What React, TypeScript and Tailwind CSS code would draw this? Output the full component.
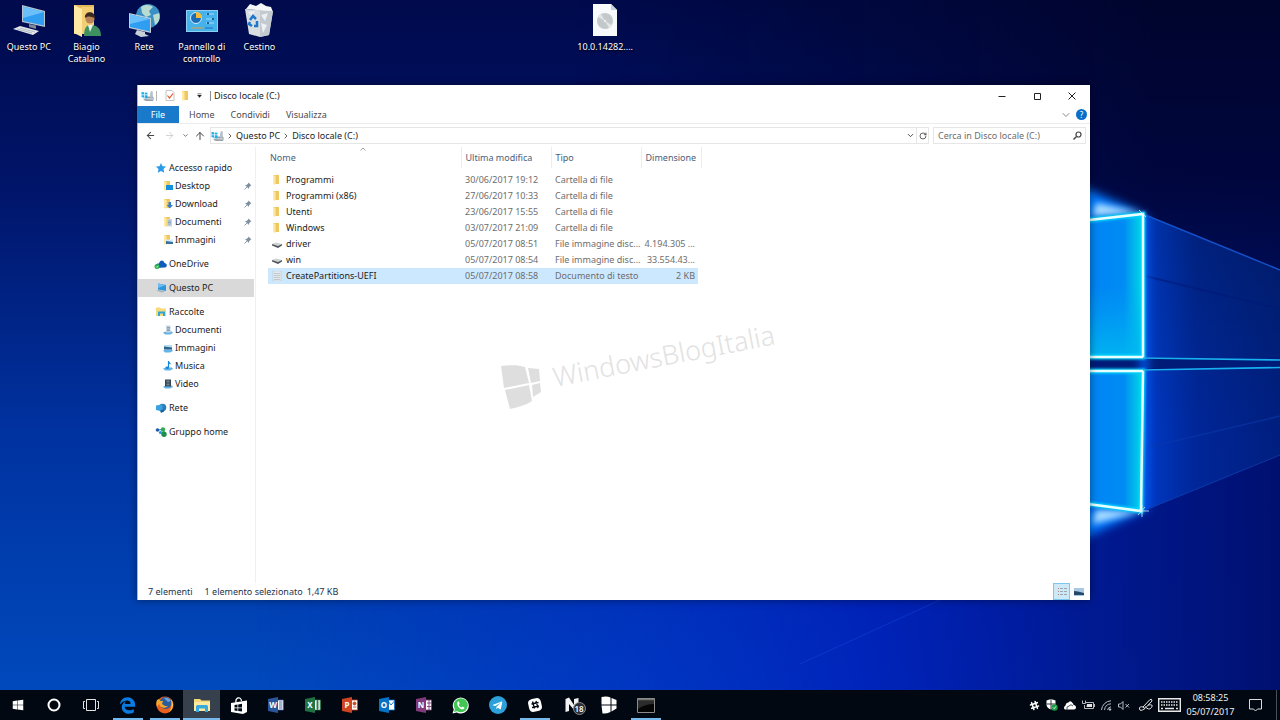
import type { ReactNode } from "react";
import { FaEdgeLegacy, FaSlackHash, FaTelegramPlane, FaWindows } from "react-icons/fa";
import { ArrowLeft, ArrowRight, ArrowUp, ChevronDown, ChevronRight, RotateCw } from "lucide-react";

/* ---------- wallpaper ---------- */

function Wallpaper() {
  return (
    <svg
      className="absolute inset-0 h-full w-full"
      viewBox="0 0 1280 720"
      preserveAspectRatio="xMidYMid slice"
      aria-hidden="true"
    >
      <defs>
        <linearGradient id="sky" x1="0" y1="0" x2="0" y2="1">
          <stop offset="0" stopColor="#000a4c" />
          <stop offset="0.25" stopColor="#001468" />
          <stop offset="0.6" stopColor="#0032a0" />
          <stop offset="1" stopColor="#004cc0" />
        </linearGradient>
        <linearGradient id="shade" x1="0" y1="0" x2="1" y2="0">
          <stop offset="0.2" stopColor="#0020c8" stopOpacity="0" />
          <stop offset="0.5" stopColor="#0020c8" stopOpacity="0.45" />
          <stop offset="0.68" stopColor="#0018b8" stopOpacity="0.75" />
          <stop offset="0.85" stopColor="#001890" stopOpacity="0.95" />
          <stop offset="1" stopColor="#001070" />
        </linearGradient>
        <linearGradient id="shadeFade" x1="0" y1="0" x2="0" y2="1">
          <stop offset="0.1" stopColor="#000" />
          <stop offset="0.6" stopColor="#fff" />
        </linearGradient>
        <mask id="shadeMask">
          <rect width="1280" height="720" fill="url(#shadeFade)" />
        </mask>
        <linearGradient id="night" x1="0" y1="0" x2="0" y2="1">
          <stop offset="0" stopColor="#00052e" />
          <stop offset="0.25" stopColor="#000538" stopOpacity="0.9" />
          <stop offset="0.6" stopColor="#000538" stopOpacity="0" />
        </linearGradient>
        <linearGradient id="nightFade" x1="0" y1="0" x2="1" y2="0">
          <stop offset="0.45" stopColor="#000" />
          <stop offset="0.9" stopColor="#fff" />
        </linearGradient>
        <mask id="nightMask">
          <rect width="1280" height="720" fill="url(#nightFade)" />
        </mask>
        <linearGradient id="paneTop" x1="0" y1="0" x2="1" y2="0">
          <stop offset="0" stopColor="#0082f4" />
          <stop offset="0.7" stopColor="#008cf4" />
          <stop offset="1" stopColor="#00dce4" />
        </linearGradient>
        <linearGradient id="paneEdge" x1="0" y1="0" x2="0" y2="1">
          <stop offset="0.5" stopColor="#00a8f4" stopOpacity="0" />
          <stop offset="1" stopColor="#00b8f0" stopOpacity="0.9" />
        </linearGradient>
        <linearGradient id="beam" x1="0" y1="0" x2="1" y2="0">
          <stop offset="0" stopColor="#0048e0" stopOpacity="0.75" />
          <stop offset="0.4" stopColor="#0038b0" stopOpacity="0.5" />
          <stop offset="1" stopColor="#003090" stopOpacity="0.45" />
        </linearGradient>
        <filter id="glow" x="-50%" y="-50%" width="200%" height="200%">
          <feGaussianBlur stdDeviation="5" />
        </filter>
        <filter id="haze" x="-50%" y="-50%" width="200%" height="200%">
          <feGaussianBlur stdDeviation="3" />
        </filter>
        <filter id="soft" x="-20%" y="-20%" width="140%" height="140%">
          <feGaussianBlur stdDeviation="1" />
        </filter>
      </defs>
      <rect width="1280" height="720" fill="url(#sky)" />
      <rect width="1280" height="720" fill="url(#shade)" mask="url(#shadeMask)" />
      <rect width="1280" height="720" fill="url(#night)" mask="url(#nightMask)" />
      <path d="M800 664 940 600" stroke="#1c50e0" strokeWidth="1" opacity="0.4" />

      {/* light beams leaving the panes */}
      <path d="M1143 214 1280 270V360L1143 357Z" fill="url(#beam)" />
      <path d="M1143 371 1280 367V455L1143 511Z" fill="url(#beam)" />
      <path d="M1143 214 1280 270" stroke="#1450c8" strokeWidth="1.500" />
      <path d="M1143 511 1280 455" stroke="#1244b4" strokeWidth="1" opacity="0.7" />
      <path d="M1145 276 1280 309" stroke="#001a78" strokeWidth="2" opacity="0.6" />
      <path d="M1145 448 1280 416" stroke="#0c38a8" strokeWidth="1.500" opacity="0.6" />
      <path d="M1090 358H1280V368H1090Z" fill="#001c78" />
      <g filter="url(#glow)">
        <path d="M1080 186 1143 213 1080 222Z" fill="#0078ff" />
        <path d="M1080 540 1143 511 1080 503Z" fill="#0078ff" />
        <path d="M1144 214V511" stroke="#0060ff" strokeWidth="7" />
      </g>
      <path d="M1096 203 1143 213 1092 216Z" fill="#a8dcff" filter="url(#haze)" />
      <path d="M1092 524 1143 511 1096 510Z" fill="#a8dcff" filter="url(#haze)" />
      <path d="M1080 221 1143 214V357H1080Z" fill="url(#paneTop)" />
      <path d="M1080 221 1143 214V357H1080Z" fill="url(#paneEdge)" />
      <path d="M1080 371H1143L1141 511 1080 503Z" fill="url(#paneTop)" />
      <g fill="none" stroke="#00d8ff" strokeWidth="5" filter="url(#soft)">
        <path d="M1080 221 1143 214V357H1080" />
        <path d="M1080 371H1143L1141 511 1080 503" />
      </g>
      <g fill="none" stroke="#e8ffff" strokeWidth="2.500">
        <path d="M1080 221 1143 214V357H1080" />
        <path d="M1080 371H1143L1141 511 1080 503" />
      </g>
      <path d="M1143 358 1280 360M1143 370 1280 367.500" stroke="#18b0f0" strokeWidth="1.600" />
      <path d="M1139 210 1146 217M1138 515 1145 507M1136 511H1149M1142 505V517" stroke="#c8f4ff" strokeWidth="0.800" />
    </svg>
  );
}

/* ---------- desktop icons ---------- */

function PcIcon() {
  return (
    <svg width="34" height="34" viewBox="0 0 34 34">
      <path d="M10 2 33 8V24L10 19Z" fill="#b9c6d0" />
      <path d="M11 3.500 32 9V22.500L11 18Z" fill="#2f9df0" />
      <path d="M11 3.500 32 9 11 15Z" fill="#6cc0fa" />
      <path d="M17 21 24 22.500V26L17 24Z" fill="#7d8a94" />
      <path d="M1 26 8 23 27 28 21 32Z" fill="#e3e8ec" />
      <path d="M5 26 20 30M8 25 23 29" stroke="#a5afb8" strokeWidth="0.8" />
    </svg>
  );
}

function UserFolderIcon() {
  return (
    <svg width="34" height="34" viewBox="0 0 34 34">
      <path d="M5 2H25V31H5Z" fill="#e2b95a" />
      <path d="M12 4H25V31H12Z" fill="#f3cf74" />
      <path d="M5 2 13 6V34L5 30Z" fill="#ffe9a4" />
      <circle cx="21" cy="16" r="4.500" fill="#b98457" />
      <path d="M16 15C15 8 26 7 26 15 22 14 20 12 16 15Z" fill="#3c2a20" />
      <path d="M15 33C15 24 18 22 22 22S32 24 32 33Z" fill="#3d9160" />
      <path d="M19 22 21 29 24 22Z" fill="#e8f0ea" />
    </svg>
  );
}

function NetworkIcon() {
  return (
    <svg width="34" height="34" viewBox="0 0 34 34">
      <circle cx="21" cy="13" r="12" fill="#3b8fc4" />
      <path d="M14 4C18 1 24 2 26 4L22 8 24 12 19 14 15 10ZM26 12 32 10C34 16 31 20 28 22Z" fill="#b8dcd0" />
      <path d="M2 10 24 15V30L2 25Z" fill="#c3d0d8" />
      <path d="M3 11.500 23 16V28.500L3 24Z" fill="#2f9df0" />
      <path d="M3 11.500 23 16 3 21Z" fill="#6cc0fa" />
      <path d="M10 27 18 29V31L22 33 14 34 8 31Z" fill="#c8d0d6" />
    </svg>
  );
}

function ControlPanelIcon() {
  return (
    <svg width="34" height="34" viewBox="0 0 34 34">
      <rect x="1" y="7" width="32" height="22" fill="#8fd0f2" />
      <rect x="2" y="8" width="30" height="20" fill="#45b2ec" />
      <circle cx="11" cy="15" r="5.500" fill="#1b6cb8" stroke="#d9f0ff" />
      <path d="M11 15V9C14 9 17 11 17 15Z" fill="#f5b93a" />
      <path d="M21 11H29M21 16H29M21 20H29" stroke="#a8dcf8" />
      <path d="M22 11H24M27 16H29M22 20H24" stroke="#1b5f9e" strokeWidth="2" />
      <path d="M6 25H18" stroke="#e0a03a" />
      <path d="M20 25H28" stroke="#1b6cb8" />
    </svg>
  );
}

function BinIcon() {
  return (
    <svg width="34" height="34" viewBox="0 0 34 34">
      <path d="M4 6 8 1 14 3 19 0 24 3 29 4 31 9Z" fill="#f4f6f8" />
      <path d="M3 6 31 8 27 32 18 34 7 31Z" fill="#d9dee2" />
      <path d="M18 8 31 8 27 32 18 34Z" fill="#c2c9cf" />
      <path d="M19 12 26 10 23 18ZM19 20 25 22 21 30ZM6 9 13 8 10 13Z" fill="#eef1f3" />
      <g fill="none" stroke="#1f77c8" strokeWidth="2.500">
        <path d="M8 17 11 13 14 16" />
        <path d="M15 18 15 23 12 23" />
        <path d="M10 23 7 21 8 19" />
      </g>
    </svg>
  );
}

function DiscFileIcon() {
  return (
    <svg width="34" height="34" viewBox="0 0 34 34">
      <path d="M5 1H23L29 7V33H5Z" fill="#f8f9fa" />
      <path d="M23 1V7H29Z" fill="#c9d3d6" />
      <circle cx="17" cy="18" r="8" fill="#c3c8ca" />
      <path d="M17 18 10 14A8 8 0 0 1 13 11ZM17 18 24 22A8 8 0 0 1 21 25Z" fill="#e2e5e5" />
      <circle cx="17" cy="18" r="1.200" fill="#eef0f0" />
    </svg>
  );
}

function DesktopItem({ label, className = "", children }: { label: string; className?: string; children: ReactNode }) {
  return (
    <button className={`flex flex-col items-center gap-1 text-center text-white ${className}`}>
      {children}
      <span className="leading-[12px] text-shadow-[0_1px_2px_#000000]">{label}</span>
    </button>
  );
}

/* ---------- small explorer icons ---------- */

function DriveIcon() {
  return (
    <svg width="13" height="12" viewBox="0 0 13 12" className="shrink-0">
      <path d="M3 8 6 6.500H12L13 8.500 12 11H5L2.500 10Z" fill="#97a3ab" />
      <path d="M3 8 13 8.500 12.500 9.500 3 9Z" fill="#dce2e6" />
      <path d="M10 1 11.800 1.500V7.500H9V4Z" fill="#b8c2c9" />
      <path d="M0.500 2 3 2.300V4.500H0.500ZM3.700 2.400 6.500 2.800V4.500H3.700ZM0.500 5.200H3V7.800L0.500 7ZM3.700 5.200H6.500V8.600L3.700 8Z" fill="#1eaeea" />
    </svg>
  );
}

function FolderGlyph() {
  return (
    <>
      <path d="M1 0H7V9H1Z" fill="#f0c862" />
      <path d="M1 0 3.500 1V10L1 9Z" fill="#ffe8a0" />
    </>
  );
}

function NavIcon({ name }: { name: string }) {
  const libraryBase = <path d="M0 7.500 3 6.500H9L10 8 7 9.500H2Z" fill="#63b4e8" />;
  return (
    <svg width="10" height="10" viewBox="0 0 10 10" className="shrink-0 overflow-visible">
      {name === "star" && (
        <path d="M5 0 6.500 3.200 10 3.600 7.500 6 8.200 9.800 5 8 1.800 9.800 2.500 6 0 3.600 3.500 3.200Z" fill="#2a9be8" />
      )}
      {name === "desktop" && (
        <>
          <FolderGlyph />
          <path d="M3 4H10V9H3Z" fill="#1590dc" />
        </>
      )}
      {name === "download" && (
        <>
          <FolderGlyph />
          <path d="M5.500 3H8V6H10L6.800 9.500 3.800 6H5.500Z" fill="#2f7ed0" />
        </>
      )}
      {name === "documents" && (
        <>
          <FolderGlyph />
          <path d="M4 2H9V9.500H4Z" fill="#c9d6df" />
          <path d="M5 4H8M5 5.500H8M5 7H8" stroke="#6f94b4" strokeWidth="0.7" />
        </>
      )}
      {name === "pictures" && (
        <>
          <FolderGlyph />
          <path d="M3 4.500H10V9H3Z" fill="#d6ebf8" />
          <path d="M3 6 10 7V9H3Z" fill="#35719f" />
        </>
      )}
      {name === "onedrive" && (
        <>
          <path d="M0 9C-1 6 1 4 3 4.500 4 0 8 1 8.500 4 11 4 12 8 9 8.500Z" fill="#0f5fb8" />
          <circle cx="1" cy="7.500" r="2.500" fill="#28b04a" />
          <path d="M0 7.500 1 8.500 2.300 6.700" fill="none" stroke="#fff" strokeWidth="0.7" />
        </>
      )}
      {name === "pc" && (
        <>
          <path d="M2 0.500 10 2V8L2 6.500Z" fill="#2f96dc" />
          <path d="M2 0.500 10 2 2 5Z" fill="#6cbcf0" />
          <path d="M0 7.500 3 7 9 8.500 6 9.500Z" fill="#9fb2c0" />
        </>
      )}
      {name === "libraries" && (
        <>
          <path d="M0 0.500H4L5 1.500H10V9H0Z" fill="#f5da7c" />
          <path d="M2 9V4.500H9V9H7V6.500H4V9Z" fill="#2fa6d8" />
        </>
      )}
      {name === "lib-documents" && (
        <>
          {libraryBase}
          <path d="M3 0.500H7.500V7.500H3Z" fill="#c4d4e0" />
          <path d="M4 2.500H7M4 4H7M4 5.500H7" stroke="#6688a6" strokeWidth="0.7" />
        </>
      )}
      {name === "lib-pictures" && (
        <>
          {libraryBase}
          <path d="M1 2H9V6.500H1Z" fill="#b6dcf2" />
          <path d="M1 3.500 9 4.500V6.500H1Z" fill="#2c648c" />
        </>
      )}
      {name === "lib-music" && (
        <>
          {libraryBase}
          <path d="M5.500 0V6.500" stroke="#1585d4" strokeWidth="1.200" />
          <path d="M5.500 0 8.500 3.500 5.500 2.500Z" fill="#1585d4" />
          <ellipse cx="4.300" cy="6.700" rx="1.800" ry="1.300" fill="#1585d4" />
        </>
      )}
      {name === "lib-video" && (
        <>
          {libraryBase}
          <path d="M2 0.500H8V7.500H2Z" fill="#39444f" />
          <path d="M3.500 1.500H6.500V3.500H3.500ZM3.500 4.500H6.500V6.500H3.500Z" fill="#6a8296" />
        </>
      )}
      {name === "network" && (
        <>
          <circle cx="6.500" cy="4.500" r="3.800" fill="#2b7fb0" />
          <path d="M0 2.500 6.500 1.500V8.500L0 7Z" fill="#3aa0e4" />
          <path d="M4 7.500 8 6.500V8.500L5 10Z" fill="#1e5f92" />
        </>
      )}
      {name === "homegroup" && (
        <>
          <path d="M1.500 3 7.500 2.500 8 8" stroke="#2c9cae" strokeWidth="1.200" fill="none" />
          <circle cx="1.500" cy="3" r="1.800" fill="#1c5fb0" />
          <circle cx="7" cy="2.500" r="2.200" fill="#35a853" />
          <circle cx="8" cy="7.200" r="2.700" fill="#1c8f4a" />
          <circle cx="4.500" cy="5.500" r="1.600" fill="#2796cc" />
        </>
      )}
    </svg>
  );
}

function PinIcon() {
  return (
    <svg width="8" height="8" viewBox="0 0 8 8" className="ml-auto">
      <path d="M4.500 0.500 7.500 3.500 6.500 3.800 5 5.500V7L1 3H2.500L4.200 1.500Z" fill="#7d8fa0" />
      <path d="M0.500 7.500 3 5" stroke="#7d8fa0" strokeWidth="0.9" />
    </svg>
  );
}

const navGroups = [
  [
    { label: "Accesso rapido", icon: "star" },
    { label: "Desktop", icon: "desktop", child: true, pinned: true },
    { label: "Download", icon: "download", child: true, pinned: true },
    { label: "Documenti", icon: "documents", child: true, pinned: true },
    { label: "Immagini", icon: "pictures", child: true, pinned: true },
  ],
  [{ label: "OneDrive", icon: "onedrive" }],
  [{ label: "Questo PC", icon: "pc", selected: true }],
  [
    { label: "Raccolte", icon: "libraries" },
    { label: "Documenti", icon: "lib-documents", child: true },
    { label: "Immagini", icon: "lib-pictures", child: true },
    { label: "Musica", icon: "lib-music", child: true },
    { label: "Video", icon: "lib-video", child: true },
  ],
  [{ label: "Rete", icon: "network" }],
  [{ label: "Gruppo home", icon: "homegroup" }],
] as { label: string; icon: string; child?: boolean; pinned?: boolean; selected?: boolean }[][];

const files = [
  { name: "Programmi", date: "30/06/2017 19:12", type: "Cartella di file", size: "", icon: "folder" },
  { name: "Programmi (x86)", date: "27/06/2017 10:33", type: "Cartella di file", size: "", icon: "folder" },
  { name: "Utenti", date: "23/06/2017 15:55", type: "Cartella di file", size: "", icon: "folder" },
  { name: "Windows", date: "03/07/2017 21:09", type: "Cartella di file", size: "", icon: "folder" },
  { name: "driver", date: "05/07/2017 08:51", type: "File immagine disc...", size: "4.194.305 ...", icon: "disk" },
  { name: "win", date: "05/07/2017 08:54", type: "File immagine disc...", size: "33.554.43...", icon: "disk" },
  { name: "CreatePartitions-UEFI", date: "05/07/2017 08:58", type: "Documento di testo", size: "2 KB", icon: "text", selected: true },
];

function FileIcon({ kind }: { kind: string }) {
  return (
    <svg width="10" height="10" viewBox="0 0 10 10" className="shrink-0">
      {kind === "folder" && <FolderGlyph />}
      {kind === "disk" && (
        <>
          <path d="M0 5 4 3.500 10 5 6 7Z" fill="#cfd3d6" />
          <path d="M0 5 6 7 10 5V6.500L6 9 0 6.500Z" fill="#4e5458" />
        </>
      )}
      {kind === "text" && (
        <>
          <path d="M1 0H9V10H1Z" fill="#e6eaec" stroke="#b4bdc2" strokeWidth="0.500" />
          <path d="M2 2.500H8M2 4.500H8M2 6.500H8M2 8.500H8" stroke="#a3afb6" strokeWidth="0.6" />
        </>
      )}
    </svg>
  );
}

/* ---------- explorer window ---------- */

function TitleBar() {
  return (
    <header className="flex h-[21px] shrink-0 items-center pr-px pl-[3px]">
      <DriveIcon />
      <span className="ml-[2px] h-[10px] w-px bg-[#b5b5b5]" />
      <button aria-label="Proprietà" className="ml-2">
        <svg width="10" height="11" viewBox="0 0 10 11">
          <path d="M1 0.500H7L9 2.500V10.500H1Z" fill="#fff" stroke="#b8b8b8" strokeWidth="0.8" />
          <path d="M2.500 5.500 4.500 8 8 3.500" fill="none" stroke="#e0562a" strokeWidth="1.200" />
        </svg>
      </button>
      <button aria-label="Nuova cartella" className="ml-[6px]">
        <svg width="8" height="10" viewBox="0 0 8 10">
          <FolderGlyph />
        </svg>
      </button>
      <button aria-label="Personalizza barra" className="ml-2">
        <svg width="5" height="5" viewBox="0 0 5 5">
          <path d="M0.500 0.500H4.500M0.500 2H4.500L2.500 4.500Z" fill="#222" stroke="#222" strokeWidth="0.4" />
        </svg>
      </button>
      <span className="ml-2 h-[10px] w-px bg-[#8c8c8c]" />
      <h1 className="ml-[3px] text-[#1c1c1c]">Disco locale (C:)</h1>
      <div className="ml-auto flex h-full text-[#222222]">
        <button aria-label="Riduci a icona" className="flex w-[35px] items-center justify-center">
          <svg width="8" height="8" viewBox="0 0 8 8">
            <path d="M0.500 4.500H7.500" stroke="currentColor" />
          </svg>
        </button>
        <button aria-label="Ingrandisci" className="flex w-[35px] items-center justify-center">
          <svg width="8" height="8" viewBox="0 0 8 8">
            <path d="M1.500 1.500H7.500V7.500H1.500Z" fill="none" stroke="currentColor" />
          </svg>
        </button>
        <button aria-label="Chiudi" className="flex w-[35px] items-center justify-center">
          <svg width="8" height="8" viewBox="0 0 8 8">
            <path d="M0.500 0.500 7.500 7.500M7.500 0.500 0.500 7.500" stroke="currentColor" />
          </svg>
        </button>
      </div>
    </header>
  );
}

function RibbonTabs() {
  return (
    <div className="flex h-[18px] shrink-0 items-stretch border-b border-[#ececec] text-[#4a4a4a]">
      <button className="-ml-px w-[42px] bg-[#1979ca] text-white">File</button>
      <div className="flex pl-[2px]">
        {["Home", "Condividi", "Visualizza"].map((tab) => (
          <button key={tab} className="px-2">
            {tab}
          </button>
        ))}
      </div>
      <button aria-label="Espandi barra multifunzione" className="mr-1 ml-auto">
        <ChevronDown size={12} strokeWidth={2} color="#8a8a8a" />
      </button>
      <button
        aria-label="Guida"
        className="mr-[3px] flex size-[11px] items-center justify-center self-center rounded-full bg-[#0a6fc8] text-[8px] text-white"
      >
        ?
      </button>
    </div>
  );
}

function AddressBar() {
  return (
    <div className="flex h-[23px] shrink-0 items-center pr-1">
      <nav className="flex w-[72px] items-center pl-[7px] text-[#444444]" aria-label="Cronologia">
        <button aria-label="Indietro">
          <ArrowLeft size={11} strokeWidth={2.2} />
        </button>
        <button aria-label="Avanti" className="ml-2 text-[#cfcfcf]">
          <ArrowRight size={11} strokeWidth={2} />
        </button>
        <button aria-label="Posizioni recenti" className="ml-[7px]">
          <ChevronDown size={7} strokeWidth={2.5} />
        </button>
        <button aria-label="Su" className="ml-[5px]">
          <ArrowUp size={12} strokeWidth={2} />
        </button>
      </nav>
      <div className="flex h-[17px] flex-1 items-center border border-[#e6e6e6] text-[#1c1c1c]">
        <DriveIcon />
        <ChevronRight size={8} strokeWidth={2.5} className="mx-[2px] text-[#444444]" />
        <button>Questo PC</button>
        <ChevronRight size={8} strokeWidth={2.5} className="mx-[2px] text-[#444444]" />
        <button>Disco locale (C:)</button>
        <button aria-label="Percorsi precedenti" className="mr-[1px] ml-auto">
          <ChevronDown size={9} strokeWidth={2.5} className="text-[#444444]" />
        </button>
        <button aria-label="Aggiorna" className="flex h-full w-3 items-center justify-center border-l border-[#e6e6e6]">
          <RotateCw size={8} strokeWidth={2.5} className="text-[#444444]" />
        </button>
      </div>
      <label className="ml-1 flex h-[17px] w-[153px] items-center border border-[#e6e6e6] pr-[3px] pl-1">
        <input
          type="search"
          aria-label="Cerca"
          placeholder="Cerca in Disco locale (C:)"
          className="min-w-0 flex-1 outline-none placeholder:text-[#6d6d6d]"
        />
        <svg width="9" height="9" viewBox="0 0 9 9">
          <circle cx="5.500" cy="3.500" r="2.500" fill="none" stroke="#444" strokeWidth="1.200" />
          <path d="M3.500 5.500 0.500 8.500" stroke="#444" strokeWidth="1.400" />
        </svg>
      </label>
    </div>
  );
}

function NavigationPane() {
  return (
    <aside className="flex w-[118px] shrink-0 flex-col gap-[6px] border-r border-[#f0f0f0] pt-3 pr-[1px] text-[#1c1c1c]">
      {navGroups.map((group) => (
        <ul key={group[0].label}>
          {group.map((item) => (
            <li key={item.label}>
              <a
                href="#"
                className={`flex h-[18px] items-center pr-[2px] ${item.child ? "gap-[2px] pl-[25px]" : "gap-[3px] pl-[18px]"} ${item.selected ? "bg-[#d9d9d9]" : ""}`}
              >
                <NavIcon name={item.icon} />
                {item.label}
                {item.pinned && <PinIcon />}
              </a>
            </li>
          ))}
        </ul>
      ))}
    </aside>
  );
}

function FileTable() {
  return (
    <table className="w-[433px] table-fixed border-collapse self-start whitespace-nowrap text-[#6d6d6d]">
      <colgroup>
        <col className="w-[193px]" />
        <col className="w-[90px]" />
        <col className="w-[90px]" />
        <col className="w-[57px]" />
        <col className="w-[3px]" />
      </colgroup>
      <thead>
        <tr className="h-[21px] text-left text-[#4c607a] [&>th]:border-r [&>th]:border-[#ededed] [&>th]:font-normal">
          <th className="relative pl-[2px]">
            Nome
            <svg width="6" height="4" viewBox="0 0 6 4" className="absolute top-0 left-[92px]">
              <path d="M0.500 3.500 3 1 5.500 3.500" fill="none" stroke="#8a8a8a" strokeWidth="0.8" />
            </svg>
          </th>
          <th className="pl-1">Ultima modifica</th>
          <th className="pl-1">Tipo</th>
          <th className="pl-1" colSpan={2}>
            Dimensione
          </th>
        </tr>
      </thead>
      <tbody className="before:block before:h-1">
        {files.map((file) => (
          <tr key={file.name} className={`h-4 leading-4 ${file.selected ? "[&>td:not(:last-child)]:bg-[#cce8ff]" : ""}`}>
            <td className="pl-1">
              <span className="flex items-center gap-1 text-[#1c1c1c]">
                <FileIcon kind={file.icon} />
                {file.name}
              </span>
            </td>
            <td className="pl-1">{file.date}</td>
            <td className="pl-1">{file.type}</td>
            <td className="pr-[3px] text-right">{file.size}</td>
            <td />
          </tr>
        ))}
      </tbody>
    </table>
  );
}

function Watermark() {
  return (
    <svg
      className="absolute top-[175px] left-[230px] overflow-visible"
      width="320"
      height="110"
      viewBox="0 0 320 110"
      aria-hidden="true"
    >
      <g fill="#dedede">
        <path d="M15 44C25 43 32 43 39 45L43 61 18 66Z" />
        <path d="M42 46 53 47 54 59 45 61Z" />
        <path d="M19 68 43 63 46 79C40 83 33 85 24 87Z" />
        <path d="M46 63 54 61 55 70 47 75Z" />
      </g>
      <text x="0" y="0" transform="translate(69 65) rotate(-11)" className="fill-[#e2e2e2] text-[27px] font-light">
        WindowsBlogItalia
      </text>
    </svg>
  );
}

function StatusBar() {
  return (
    <footer className="flex h-[17px] shrink-0 items-center pr-[3px] pl-[10px] text-[#23344d]">
      <span>7 elementi</span>
      <span className="ml-3">1 elemento selezionato</span>
      <span className="ml-1">1,47 KB</span>
      <button
        aria-label="Dettagli"
        className="ml-auto flex size-[17px] items-center justify-center border border-[#7cc7ee] bg-[#cde9f7]"
      >
        <svg width="10" height="9" viewBox="0 0 10 9">
          <path d="M1 1.500H2M1 4.500H2M1 7.500H2" stroke="#c08080" />
          <path d="M3 1.500H6M7 1.500H10M3 4.500H6M7 4.500H10M3 7.500H6M7 7.500H10" stroke="#9aa7ae" />
        </svg>
      </button>
      <button aria-label="Icone grandi" className="flex size-[17px] items-center justify-center">
        <svg width="10" height="8" viewBox="0 0 10 8">
          <path d="M0 0H10V8H0Z" fill="#a8c8e4" />
          <path d="M0 3 4 3.500 10 5V7H0Z" fill="#24486a" />
        </svg>
      </button>
    </footer>
  );
}

function ExplorerWindow() {
  return (
    <section
      aria-label="Disco locale (C:)"
      className="absolute top-[85px] right-[190px] bottom-[90px] left-[137px] flex flex-col border-l border-[#8fbdf5] bg-white shadow-[0_0_8px_rgba(0,0,0,0.45)]"
    >
      <TitleBar />
      <RibbonTabs />
      <AddressBar />
      <div className="relative flex min-h-0 flex-1">
        <NavigationPane />
        <div className="relative flex flex-1 pl-3">
          <FileTable />
          <Watermark />
        </div>
      </div>
      <StatusBar />
    </section>
  );
}

/* ---------- taskbar ---------- */

function OfficeIcon({ letter, color, children }: { letter: string; color: string; children?: ReactNode }) {
  return (
    <svg width="16" height="16" viewBox="0 0 16 16">
      <path d="M8 3H15.500V13H8Z" fill="#fff" stroke={color} strokeWidth="0.8" />
      <g stroke={color} fill={color} strokeWidth="0.9">
        {children}
      </g>
      <path d="M0 2 10 0V16L0 14Z" fill={color} />
      <text x="5" y="11" textAnchor="middle" className="fill-white text-[8px] font-bold">
        {letter}
      </text>
    </svg>
  );
}

function TaskButton({
  label,
  state = "idle",
  children,
}: {
  label: string;
  state?: "idle" | "open" | "active";
  children: ReactNode;
}) {
  return (
    <button
      aria-label={label}
      className={`flex w-[37px] shrink-0 flex-col items-center ${state === "active" ? "bg-[#36414d]" : ""}`}
    >
      <span className="flex flex-1 items-center">{children}</span>
      <span className={`-mt-[2px] h-[2px] ${state === "idle" ? "w-0" : state === "open" ? "w-[30px] bg-[#76b9ed]" : "w-full bg-[#76b9ed]"}`} />
    </button>
  );
}

function Taskbar() {
  const lines = <path d="M11 5H14.500M11 7H14.500M11 9H14.500M11 11H14.500" />;
  return (
    <footer className="relative flex h-[30px] shrink-0 bg-[#020812] text-white">
      <button aria-label="Start" className="flex w-9 items-center justify-center">
        <FaWindows size={12} />
      </button>
      <button aria-label="Cortana" className="flex w-9 items-center justify-center">
        <svg width="14" height="14" viewBox="0 0 14 14">
          <circle cx="7" cy="7" r="5.500" fill="none" stroke="#fff" strokeWidth="2" />
        </svg>
      </button>
      <button aria-label="Visualizzazione attività" className="flex w-[37px] items-center justify-center">
        <svg width="16" height="12" viewBox="0 0 16 12" fill="none" stroke="#e4e4e4">
          <path d="M3.500 0.500H12.500V11.500H3.500ZM2 2.500H0.500V9.500H2M14 2.500H15.500V9.500H14" />
        </svg>
      </button>
      <TaskButton label="Microsoft Edge" state="open">
        <FaEdgeLegacy size={17} color="#0a7be0" />
      </TaskButton>
      <TaskButton label="Firefox" state="open">
        <svg width="18" height="18" viewBox="0 0 18 18">
          <circle cx="9" cy="9" r="8.500" fill="#e8601c" />
          <circle cx="9.500" cy="7" r="6" fill="#2a5c9e" />
          <path d="M8 2C11 1 14 3 15 5L12 6 10 4Z" fill="#6aa6d8" />
          <path d="M1 4 3 3 4 5 7 5 6 8 9 10 12 10C9 13 4 12 3 8L1 11C0 9 0 6 1 4Z" fill="#f8a62a" />
          <path d="M15 3C18 7 18 13 13 16 16 12 16 7 15 3Z" fill="#fcc63c" />
        </svg>
      </TaskButton>
      <TaskButton label="Esplora file" state="active">
        <svg width="16" height="14" viewBox="0 0 16 14">
          <path d="M0 1H6L7.500 2.500H16V13H0Z" fill="#f6d878" />
          <path d="M0 4H16V13H0Z" fill="#fdeaa0" />
          <path d="M2 14V8.500Q2 7 3.500 7H12.500Q14 7 14 8.500V14H11V10.500H5V14Z" fill="#38a9dc" />
        </svg>
      </TaskButton>
      <TaskButton label="Store">
        <svg width="16" height="17" viewBox="0 0 16 17">
          <path d="M5 6C4 0 10 -1 10.500 4" fill="none" stroke="#fff" strokeWidth="1.200" />
          <path d="M0 6 16 3.500V15L12 17 0 15Z" fill="#fff" />
          <path d="M3.500 8 6.500 7.500V10.500H3.500ZM7.200 7.400 11 6.800V10.500H7.200ZM3.500 11.200H6.500V14L3.500 13.500ZM7.200 11.200H11V14.500L7.200 14Z" fill="#020812" />
        </svg>
      </TaskButton>
      <TaskButton label="Word">
        <OfficeIcon letter="W" color="#2a5699">
          {lines}
        </OfficeIcon>
      </TaskButton>
      <TaskButton label="Excel">
        <OfficeIcon letter="X" color="#207245">
          {lines}
          <path d="M12.500 3V13" />
        </OfficeIcon>
      </TaskButton>
      <TaskButton label="PowerPoint">
        <OfficeIcon letter="P" color="#d04423">
          <circle cx="12.500" cy="6.500" r="1.500" />
          <path d="M11 10H14.500" />
        </OfficeIcon>
      </TaskButton>
      <TaskButton label="Outlook">
        <OfficeIcon letter="O" color="#0572c6">
          <path d="M9 4 12 8 15.500 4" fill="none" />
        </OfficeIcon>
      </TaskButton>
      <TaskButton label="OneNote">
        <OfficeIcon letter="N" color="#80397b">
          <path d="M11 6H15.500M11 9.500H15.500M13 3V13" />
        </OfficeIcon>
      </TaskButton>
      <TaskButton label="WhatsApp">
        <svg width="17" height="17" viewBox="0 0 17 17">
          <path d="M0.500 16.500 1.800 12.500A8 8 0 1 1 4.800 15.500Z" fill="#fff" />
          <circle cx="8.800" cy="8.200" r="7" fill="#42c552" />
          <path d="M2 15 3 11.500 5.500 14Z" fill="#42c552" />
          <path d="M6 4.500C4 6 6 10 8 11.500S12.500 12.500 12.500 10.500L10.500 9.500 9.500 10.500C8 10 7 9 6.800 7.500L7.600 6.800 7 4.500Z" fill="#fff" />
        </svg>
      </TaskButton>
      <TaskButton label="Telegram">
        <span className="flex size-[18px] items-center justify-center rounded-full bg-[#2ca0da]">
          <FaTelegramPlane size={11} />
        </span>
      </TaskButton>
      <TaskButton label="Slack" state="open">
        <svg width="14" height="14" viewBox="0 0 14 14">
          <path d="M4 1 9 0Q12 0 13 4L14 9Q14 12 10 13L5 14Q2 14 1 10L0 5Q0 2 4 1Z" fill="#fff" />
          <path d="M4.500 3.500 6.500 10.500M8 3 10 10M3.500 6 10.500 4.500M4 9.500 11 8" stroke="#020812" strokeWidth="1.300" />
        </svg>
      </TaskButton>
      <TaskButton label="Notifiche, 18">
        <span className="relative flex">
          <svg width="14" height="16" viewBox="0 0 14 16">
            <path d="M0.500 15V2L4 0.500 9 8V2L13.500 1V14H10L4 7V14Z" fill="#f2f2f2" />
          </svg>
          <span className="absolute top-[5px] left-2 flex size-[13px] items-center justify-center rounded-full border border-[#8a8a8a] bg-[#2c2f36] text-[8px] font-semibold">
            18
          </span>
        </span>
      </TaskButton>
      <TaskButton label="WindowsBlogItalia">
        <svg width="16" height="18" viewBox="0 0 16 18" fill="#fff">
          <path d="M0.500 1Q6 0 9.500 1.500V8.500H0.500ZM10.500 2 15.500 4V8.500H10.500ZM0.500 9.500H9.500V16Q5 18 1.500 17.500ZM10.500 9.500H15.500V12.500L10.500 15.500Z" />
        </svg>
      </TaskButton>
      <TaskButton label="Prompt dei comandi" state="open">
        <svg width="18" height="15" viewBox="0 0 18 15">
          <path d="M0.500 0.500H17.500V14.500H0.500Z" fill="#050505" stroke="#8c8c8c" />
          <path d="M1 1H17V2.500H1Z" fill="#777" />
          <path d="M1 3H17V6Q8 6 1 11Z" fill="#2c2c2c" />
        </svg>
      </TaskButton>

      <div className="ml-auto flex items-center">
        <div className="flex items-center gap-[6px]">
          <FaSlackHash size={11} />
          <svg width="12" height="12" viewBox="0 0 12 12">
            <path d="M5 0 9.500 1.500V6Q9 9 5 10.500 1 9 0.500 6V1.500Z" fill="#fff" />
            <path d="M5 0V10.500M0.500 5H9.500" stroke="#020812" strokeWidth="0.8" />
            <circle cx="8.500" cy="8.500" r="3.200" fill="#1e9b48" />
            <path d="M7 8.500 8.200 9.700 10 7.300" fill="none" stroke="#fff" strokeWidth="0.8" />
          </svg>
          <svg width="12" height="9" viewBox="0 0 12 9">
            <path d="M0 7Q0 5 1.500 4.500 2 1.500 4.500 1.500 6.500 -1 8.500 2 9.500 2.500 9.500 4 12 4 12 6.500 12 8.500 10 8.500H1.500Q0 8.500 0 7Z" fill="#fff" />
            <path d="M3 8.500Q2 5.500 5 5 7 2.500 9 5" fill="none" stroke="#020812" strokeWidth="0.7" />
          </svg>
          <svg width="13" height="10" viewBox="0 0 13 10" fill="none" stroke="#e4e4e4" strokeWidth="0.800">
            <path d="M4 2.500H11.500V8.500H2.500V5M12.500 4V7M0.500 0.500V3.500H3.500V0.500" />
            <path d="M5 4H10V7H4.500Z" fill="#e4e4e4" stroke="none" />
          </svg>
          <svg width="11" height="11" viewBox="0 0 11 11" fill="none" stroke="#b8bcc4">
            <path d="M0.500 10A10 10 0 0 1 10 0.800M3.500 10A7 7 0 0 1 10 3.800M6.500 10A4 4 0 0 1 10 6.800" />
            <circle cx="9" cy="9.500" r="0.800" fill="#fff" />
          </svg>
          <svg width="12" height="9" viewBox="0 0 12 9" fill="none" stroke="#c8ccd2" strokeWidth="0.9">
            <path d="M0.500 3H2.500L5 0.500V8.500L2.500 6H0.500ZM7.500 3 11 6.500M11 3 7.500 6.500" />
          </svg>
        </div>
        <svg width="14" height="14" viewBox="0 0 14 14" fill="none" stroke="#e4e4e4" className="ml-[9px]">
          <path d="M4 9 11 1.500Q13 0.500 13 3L6 10.500ZM4 9Q0 8 0.500 11T6 10.500M6 8.500Q10 13 12.500 9.500T9 7" />
        </svg>
        <svg width="23" height="14" viewBox="0 0 23 14" fill="none" stroke="#e8e8e8" className="ml-[5px]">
          <path d="M0.700 0.700H22.300V13.300H0.700Z" strokeWidth="1.400" />
          <path d="M3 4H20M3 7H20" strokeDasharray="1.500 1" strokeWidth="1.500" />
          <path d="M3 10.500H5M7 10.500H16M18 10.500H20" strokeWidth="1.500" />
        </svg>
        <time className="mr-[7px] ml-[6px] flex w-[47px] flex-col items-center leading-[14px] text-[#f0f0f0]">
          <span>08:58:25</span>
          <span>05/07/2017</span>
        </time>
        <button aria-label="Centro notifiche" className="mr-[14px] ml-2">
          <svg width="13" height="13" viewBox="0 0 13 13" fill="none" stroke="#dcdcdc">
            <path d="M0.500 0.500H12.500V10H8.500L6.500 12 4.500 10H0.500Z" />
          </svg>
        </button>
      </div>
      <button aria-label="Mostra desktop" className="w-1 border-l border-[#4b5058]" />
    </footer>
  );
}

export default function App() {
  return (
    <div className="relative flex h-screen flex-col overflow-hidden bg-[#001468] font-['Noto_Sans',sans-serif] text-[9px] leading-[12px]">
      <Wallpaper />
      <main className="relative flex-1">
        <div className="grid w-[634px] grid-cols-11 items-start pt-[3px]">
          <DesktopItem label="Questo PC">
            <PcIcon />
          </DesktopItem>
          <DesktopItem label="Biagio Catalano">
            <UserFolderIcon />
          </DesktopItem>
          <DesktopItem label="Rete">
            <NetworkIcon />
          </DesktopItem>
          <DesktopItem label="Pannello di controllo">
            <ControlPanelIcon />
          </DesktopItem>
          <DesktopItem label="Cestino">
            <BinIcon />
          </DesktopItem>
          <DesktopItem label="10.0.14282...." className="col-start-11">
            <DiscFileIcon />
          </DesktopItem>
        </div>
        <ExplorerWindow />
      </main>
      <Taskbar />
    </div>
  );
}
